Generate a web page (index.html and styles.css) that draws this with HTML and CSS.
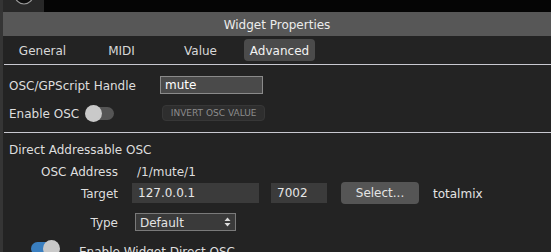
FILE: index.html
```html
<!DOCTYPE html>
<html lang="en">
<head>
<meta charset="UTF-8">
<title>Widget Properties</title>
<link rel="stylesheet" href="styles.css">
</head>
<body>

<div class="topstrip">
    <div class="knobbox">
        <svg width="41" height="12" viewBox="0 0 41 12">
            <circle cx="21" cy="-5" r="9" fill="#0d0d0d" stroke="#9a9a9a" stroke-width="1.2"/>
        </svg>
    </div>
</div>

<div class="window">
    <div class="titlebar">Widget Properties</div>

    <div class="tabs">
        <div class="tab"><span>General</span></div>
        <div class="tab"><span>MIDI</span></div>
        <div class="tab"><span>Value</span></div>
        <div class="tab active"><span>Advanced</span></div>
    </div>
    <div class="separator"></div>

    <!-- Handle and OSC switch -->
    <div class="section">
        <div class="row handle-row">
            <div class="label wide">OSC/GPScript Handle</div>
            <div class="textbox">mute</div>
        </div>
        <div class="row enable-row">
            <div class="label">Enable OSC</div>
            <div class="toggle off"><div class="knob"></div></div>
            <div class="flatbtn">INVERT OSC VALUE</div>
        </div>
    </div>
    <div class="separator"></div>

    <!-- Direct addressable OSC -->
    <div class="section">
        <div class="heading">Direct Addressable OSC</div>
        <div class="row addr-row">
            <div class="label col">OSC Address</div>
            <div class="addr-value">/1/mute/1</div>
        </div>
        <div class="row target-row">
            <div class="label col">Target</div>
            <div class="field ip">127.0.0.1</div>
            <div class="field port">7002</div>
            <div class="selectbtn">Select...</div>
            <div class="device">totalmix</div>
        </div>
        <div class="row type-row">
            <div class="label col">Type</div>
            <div class="dropdown">
                <span>Default</span>
                <svg width="7" height="10" viewBox="0 0 7 10">
                    <path d="M3.5 0.5 L6.5 4 L0.5 4 Z M3.5 9.5 L6.5 6 L0.5 6 Z" fill="#dcdcdc"/>
                </svg>
            </div>
        </div>
        <div class="row widget-row">
            <div class="toggle on"><div class="knob"></div></div>
            <div class="label">Enable Widget Direct OSC</div>
        </div>
    </div>
</div>

</body>
</html>
```

FILE: styles.css
```css
/* Widget properties panel */
body {
    margin: 0;
    width: 551px;
    height: 252px;
    overflow: hidden;
    background-color: #000000;
    font-family: 'DejaVu Sans', sans-serif;
    font-size: 12px;
    color: #dedede;
}
.topstrip {
    height: 12px;
    background-color: #050505;
}
.knobbox {
    width: 41px;
    height: 12px;
    background-color: #282828;
    border-left: 3px solid #343434;
}
.knobbox svg {
    display: block;
}
.window {
    border-left: 3px solid #353535;
    background-color: #232323;
    height: 240px;
}
.titlebar {
    height: 22px;
    padding-top: 2px;
    line-height: 22px;
    background-color: #575757;
    color: #ececec;
    text-align: center;
}
.tabs {
    display: flex;
    height: 28px;
}
.tab {
    width: 79px;
    display: flex;
    justify-content: center;
    align-items: center;
}
.tab span {
    width: 71px;
    height: 22px;
    line-height: 24px;
    text-align: center;
    border-radius: 4px;
    color: #d8d8d8;
}
.tab.active span {
    background-color: #4b4b4b;
    color: #f2f2f2;
}
.separator {
    height: 1px;
    margin-left: 1px;
    background-color: #c8c8d0;
}
.section {
    padding-left: 6px;
}
.row {
    display: flex;
    align-items: center;
}
.label,
.addr-value,
.device {
    padding-top: 2px;
}
.label.wide {
    width: 151px;
}
.handle-row {
    height: 18px;
    padding-top: 11px;
}
.textbox {
    width: 97px;
    height: 16px;
    line-height: 17px;
    padding-left: 4px;
    background-color: #4a4a4a;
    border: 1px solid #8a8a8a;
    color: #ffffff;
}
.enable-row {
    height: 16px;
    padding-top: 11px;
    padding-bottom: 11px;
}
.toggle {
    width: 28px;
    height: 13px;
    border-radius: 7px;
    position: relative;
}
.toggle .knob {
    position: absolute;
    top: -2px;
    width: 17px;
    height: 17px;
    border-radius: 50%;
    background-color: #c9c9c9;
}
.toggle.off {
    background-color: #555555;
    margin-left: 7px;
}
.toggle.off .knob {
    left: -1px;
}
.toggle.on {
    background-color: #3a7fc0;
    margin-left: 22px;
    margin-right: 20px;
}
.toggle.on .knob {
    right: -1px;
}
.flatbtn {
    margin-left: 48px;
    width: 101px;
    height: 14px;
    line-height: 15px;
    text-align: center;
    background-color: #2e2e2e;
    border: 1px solid #373737;
    border-radius: 4px;
    color: #8c8c8c;
    font-size: 9px;
}
.heading {
    height: 16px;
    line-height: 16px;
    margin-top: 9px;
}
.label.col {
    width: 109px;
    text-align: right;
}
.addr-row {
    height: 16px;
    margin-top: 5px;
}
.addr-value {
    margin-left: 19px;
}
.target-row {
    height: 20px;
    margin-top: 4px;
}
.field {
    height: 20px;
    line-height: 21px;
    padding-left: 6px;
    background-color: #3b3b3b;
    color: #e6e6e6;
}
.field.ip {
    width: 121px;
    margin-left: 14px;
}
.field.port {
    width: 50px;
    margin-left: 12px;
}
.selectbtn {
    margin-left: 14px;
    width: 78px;
    height: 22px;
    line-height: 23px;
    text-align: center;
    background-color: #555555;
    border-radius: 4px;
    color: #e4e4e4;
}
.device {
    margin-left: 14px;
    color: #e4e4e4;
}
.type-row {
    height: 18px;
    margin-top: 10px;
}
.dropdown {
    margin-left: 17px;
    width: 91px;
    height: 16px;
    padding: 0 4px;
    display: flex;
    justify-content: space-between;
    align-items: center;
    background-color: #3a3a3a;
    border: 1px solid #7a7a7a;
    color: #e4e4e4;
}
.dropdown span {
    padding-top: 1px;
}
.widget-row {
    height: 13px;
    margin-top: 11px;
}
.widget-row .label {
    padding-top: 6px;
}
```
